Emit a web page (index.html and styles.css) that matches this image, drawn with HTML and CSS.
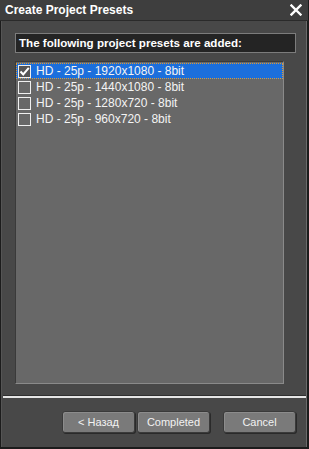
FILE: index.html
```html
<!DOCTYPE html>
<html>
	<head>
		<title>Create Project Presets</title>
		<link rel="stylesheet" href="styles.css">
	</head>
	<body>
		<div class="window">
			<header class="titlebar">
				<span class="title">Create Project Presets</span>
				<svg class="close" width="12" height="12" viewBox="0 0 12 12">
					<path d="M1.5 1.5 L10.5 10.5 M10.5 1.5 L1.5 10.5" stroke="#fff" stroke-width="2.4" stroke-linecap="square"/>
				</svg>
			</header>

			<section class="content">
				<div class="caption">The following project presets are added:</div>

				<ul class="presets">
					<li class="preset selected">
						<span class="check checked">
							<svg width="11" height="11" viewBox="0 0 11 11">
								<path d="M1.5 5.5 L4.2 8.5 L9.8 1.8" fill="none" stroke="#fff" stroke-width="2"/>
							</svg>
						</span>
						HD - 25p - 1920x1080 - 8bit
					</li>
					<li class="preset"><span class="check"></span>HD - 25p - 1440x1080 - 8bit</li>
					<li class="preset"><span class="check"></span>HD - 25p - 1280x720 - 8bit</li>
					<li class="preset"><span class="check"></span>HD - 25p - 960x720 - 8bit</li>
				</ul>
			</section>

			<hr class="divider">

			<footer class="buttons">
				<button class="btn">&lt; Назад</button>
				<button class="btn">Completed</button>
				<button class="btn cancel">Cancel</button>
			</footer>
		</div>
	</body>
</html>
```

FILE: styles.css
```css
body {
	margin: 0;
	background-color: #484848;
	font-family: "Liberation Sans", Arial, sans-serif;
}
.window {
	width: 309px;
	height: 449px;
	box-sizing: border-box;
	background-color: #484848;
	border: 1px solid #1c1c1c;
	border-right-width: 2px;
	border-bottom-width: 2px;
	box-shadow: inset 1px 0 0 #555, inset -1px 0 0 #6a6a6a;
	display: flex;
	flex-direction: column;
}
.titlebar {
	height: 20px;
	background-color: #3e3e3e;
	border-bottom: 1px solid #2a2a2a;
	display: flex;
	align-items: center;
	justify-content: space-between;
	padding: 0 6px 0 5px;
	margin: -1px -1px 0 -1px;
}
.title {
	color: #fff;
	font-weight: bold;
	font-size: 12px;
}
.close {
	display: block;
}
.content {
	padding: 12px 0 0 14px;
}
.caption {
	width: 276px;
	height: 18px;
	line-height: 18px;
	background-color: #242424;
	border: 1px solid #7c7c7c;
	color: #fff;
	font-weight: bold;
	font-size: 11.6px;
	padding-left: 3px;
}
.presets {
	list-style: none;
	margin: 8px 0 0 0;
	padding: 1px 0 0 0;
	width: 267px;
	height: 320px;
	background-color: #686868;
	border: 1px solid #3a3a3a;
	border-right-color: #8a8a8a;
	border-bottom-color: #8a8a8a;
}
.preset {
	height: 16px;
	display: flex;
	align-items: center;
	color: #f4f4f4;
	font-size: 12px;
	box-sizing: border-box;
	border: 1px solid transparent;
}
.preset.selected {
	background-color: #1c6fdc;
	border: 1px dotted #e49a2c;
}
.check {
	width: 11px;
	height: 11px;
	border: 1px solid #f0f0f0;
	margin: 0 5px 0 1px;
	display: flex;
	align-items: center;
	justify-content: center;
}
.check.checked {
	background-color: #555;
}
.divider {
	margin: 11px 1px 0 2px;
	border: 0;
	border-top: 1px solid #303030;
	border-bottom: 2px solid #e6e6e6;
	height: 0;
}
.buttons {
	display: flex;
	padding: 13px 0 0 61px;
}
.btn {
	width: 73px;
	height: 22px;
	background-color: #7a7a7a;
	border: 1px solid #3a3a3a;
	border-radius: 3px;
	box-shadow: 1px 1px 0 #2a2a2a, inset 1px 1px 0 #8c8c8c;
	color: #f2f2f2;
	font-family: "Liberation Sans", Arial, sans-serif;
	font-size: 11px;
	padding: 0;
	margin-right: 2px;
}
.btn.cancel {
	margin-left: 11px;
}
```
